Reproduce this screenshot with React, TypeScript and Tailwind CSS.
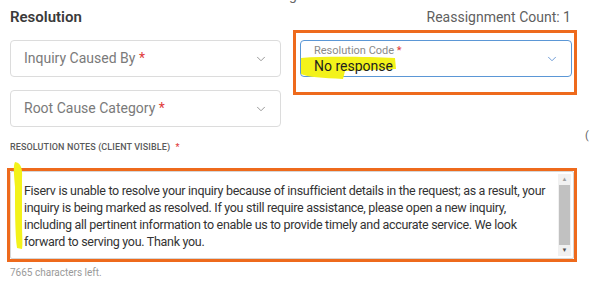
import { ChevronDown } from "lucide-react"

const font = { fontFamily: "Roboto, 'Liberation Sans', sans-serif" }

function SelectBox({ label }: { label: string }) {
  return (
    <div className="flex h-[37px] items-center justify-between rounded-[4px] border border-[#dcdcdc] bg-white pl-[13px] pr-[12px]">
      <span className="text-[14px] text-[#7a7a7a]">
        {label} <span className="text-[#e03a3a]">*</span>
      </span>
      <ChevronDown className="h-[14px] w-[14px] text-[#8a8a8a]" strokeWidth={1.5} />
    </div>
  )
}

export default function App() {
  return (
    <div className="relative h-[285px] w-[616px] overflow-hidden bg-white" style={font}>
      <div className="pl-[10px] pt-[6px]">
        {/* header */}
        <div className="flex h-[22px] w-[561px] items-center justify-between">
          <span className="text-[15px] font-semibold text-[#3a3a3a]">Resolution</span>
          <span className="text-[14px] text-[#5f5f5f]">Reassignment Count: 1</span>
        </div>

        <div className="mt-[2px] flex">
          <div className="mt-[10px] flex w-[271px] flex-col gap-[13px]">
            <SelectBox label="Inquiry Caused By" />
            <SelectBox label="Root Cause Category" />
          </div>

          <div className="ml-[12px] h-[65px] w-[284px] border-[3px] border-[#ee6a1c] pl-[4px] pr-[2px] pt-[7px]">
            <div className="relative flex h-[37px] items-center justify-between rounded-[4px] border-[1.5px] border-[#5b97d6] bg-white pl-[13px] pr-[12px]">
              <svg className="absolute left-[-2px] top-[13px] h-[26px] w-[102px]" viewBox="0 0 102 26">
                <path
                  d="M2 4 C 30 2, 70 3, 96 4 L 97 15 C 80 16, 60 16, 46 17 L 44 25 C 24 24, 8 23, 2 20 Z"
                  fill="#f3f21a"
                />
              </svg>
              <div className="relative flex flex-col leading-none">
                <span className="text-[11px] text-[#8a8a8a]">
                  Resolution Code <span className="text-[#e03a3a]">*</span>
                </span>
                <span className="mt-[3px] text-[14px] text-[#1e1e1e]">No response</span>
              </div>
              <ChevronDown className="h-[14px] w-[14px] text-[#5b8fd0]" strokeWidth={1.5} />
            </div>
          </div>
        </div>

        <div className="mt-[14px] text-[9px] font-medium tracking-[0.1px] text-[#5a5a5a]">
          RESOLUTION NOTES (CLIENT VISIBLE) <span className="ml-[3px] text-[#e03a3a]">*</span>
        </div>

        <div className="-ml-[3px] mt-[13px] h-[94px] w-[570px] border-[3px] border-[#ee6a1c]">
          <div className="flex h-[88px] w-[564px] rounded-[2px] border border-[#d6d6d6] bg-white">
            <div className="min-w-0 flex-1 overflow-hidden whitespace-nowrap pl-[13px] pt-[10px] text-[12.5px] leading-[17.3px] tracking-[-0.3px] text-[#333333]">
              <div>Fiserv is unable to resolve your inquiry because of insufficient details in the request; as a result, your</div>
              <div>inquiry is being marked as resolved. If you still require assistance, please open a new inquiry,</div>
              <div>including all pertinent information to enable us to provide timely and accurate service. We look</div>
              <div>forward to serving you. Thank you.</div>
            </div>
            <div className="my-[2px] mr-[2px] flex w-[13px] shrink-0 flex-col items-center bg-[#f1f1f1]">
              <div className="flex h-[11px] items-center text-[6px] leading-none text-[#a0a0a0]">▲</div>
              <div className="w-[11px] flex-1 bg-[#c1c1c1]" />
              <div className="flex h-[11px] items-center text-[6px] leading-none text-[#505050]">▼</div>
            </div>
          </div>
        </div>

        <div className="mt-[3px] text-[10px] text-[#9a9a9a]">7665 characters left.</div>
      </div>

      {/* highlighter stroke */}
      <svg className="absolute left-[12px] top-[162px] h-[88px] w-[14px]" viewBox="0 0 14 88">
        <path d="M3 0 C 8 1, 11 4, 10 18 L 10 60 C 10 74, 11 82, 10 87 L 5 86 C 3 72, 3 45, 3 25 C 2 12, 1 4, 3 0 Z" fill="#f3f21a" />
      </svg>
      {/* stray glyphs at edges */}
      <span className="absolute left-[289px] top-[-12px] text-[14px] leading-none text-[#666]">g</span>
      <span className="absolute left-[585px] top-[130px] text-[11px] leading-none text-[#666]">(</span>
    </div>
  )
}
